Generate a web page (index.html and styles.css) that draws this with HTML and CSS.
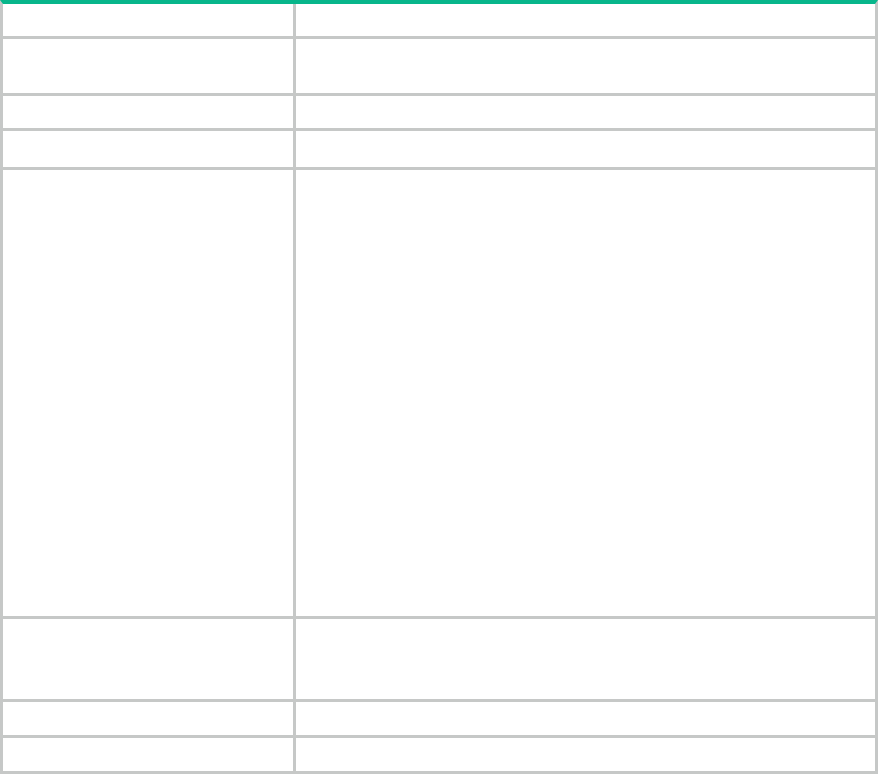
FILE: index.html
```html
<!DOCTYPE html>
<html lang="en">
<head>
  <meta charset="UTF-8" />
  <meta name="viewport" content="width=device-width, initial-scale=1.0"/>
  <title>Table</title>
  <link rel="stylesheet" href="styles.css">
</head>
<body>

 <div class="tabella">
  <div class="cella r1"></div><div class="cella r1"></div>
  <div class="cella r2"></div><div class="cella r2"></div>
  <div class="cella r3"></div><div class="cella r3"></div>
  <div class="cella r4"></div><div class="cella r4"></div>
  <div class="cella r5"></div><div class="cella r5"></div>
  <div class="cella r6"></div><div class="cella r6"></div>
  <div class="cella r7"></div><div class="cella r7"></div>
  <div class="cella r8"></div><div class="cella r8"></div>
 </div>

</body>
</html>
```

FILE: styles.css
```css
body {
  margin: 0;
  background: #fff;
  font-family: Arial, "Liberation Sans", sans-serif;
}

/* griglia della tabella */
.tabella {
  width: 878px;
  box-sizing: border-box;
  display: grid;
  grid-template-columns: 290px 1fr;
  gap: 3px;
  background: #c6c8c7;
  border: 3px solid #c6c8c7;
  border-top: 4px solid #07b68b;
}
.cella {
  background: #fff;
}
.r1 { height: 32px; }
.r2 { height: 54px; }
.r3 { height: 32px; }
.r4 { height: 36px; }
.r5 { height: 446px; }
.r6 { height: 80px; }
.r7 { height: 33px; }
.r8 { height: 33px; }
```
